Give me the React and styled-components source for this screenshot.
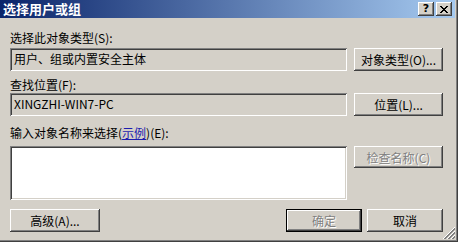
import React from 'react';
import styled, { createGlobalStyle, css } from 'styled-components';

const Global = createGlobalStyle`
  html, body {
    margin: 0;
    padding: 0;
    background: #d4d0c8;
  }
  body {
    font-family: "Noto Sans CJK SC", "Liberation Sans", sans-serif;
    font-size: 12px;
    color: #000;
  }
`;

const Window = styled.div`
  position: relative;
  width: 458px;
  height: 242px;
  box-sizing: border-box;
  background: #d4d0c8;
  box-shadow: inset -1px -1px #404040, inset -2px -2px #808080;
  display: flex;
  flex-direction: column;
  overflow: hidden;
`;

const TitleBar = styled.div`
  width: 455px;
  height: 18px;
  flex: none;
  display: flex;
  align-items: center;
  background: linear-gradient(to right, #0a246a, #a6caf0);
  padding-left: 3px;
  box-sizing: border-box;
`;

const Title = styled.div`
  flex: 1;
  color: #fff;
  font-weight: bold;
  font-size: 13px;
  line-height: 18px;
`;

const raised = css`
  background: #d4d0c8;
  box-shadow: inset -1px -1px #404040, inset 1px 1px #ffffff,
    inset -2px -2px #808080, inset 2px 2px #d4d0c8;
`;

const CaptionButton = styled.div`
  ${raised};
  width: 16px;
  height: 14px;
  margin-right: ${(p) => (p.$gap ? '2px' : '3px')};
  display: flex;
  align-items: center;
  justify-content: center;
  font-family: "DejaVu Sans", sans-serif;
  font-weight: bold;
  font-size: 11px;
  line-height: 14px;
`;

const Body = styled.div`
  flex: 1;
  display: flex;
  flex-direction: column;
  padding: 13px 15px 0 10px;
`;

const Label = styled.div`
  line-height: 14px;
  height: 14px;
  margin-top: ${(p) => p.$mt || 0}px;
  white-space: nowrap;
`;

const Row = styled.div`
  display: grid;
  grid-template-columns: 337px 89px;
  column-gap: 7px;
  align-items: start;
  margin-top: ${(p) => p.$mt || 0}px;
`;

const Field = styled.div`
  height: ${(p) => p.$h || 23}px;
  box-sizing: border-box;
  background: ${(p) => (p.$white ? '#fff' : '#d4d0c8')};
  box-shadow: inset 1px 1px #808080, inset -1px -1px #ffffff,
    inset 2px 2px #404040, inset -2px -2px #d4d0c8;
  padding: 0 4px;
  line-height: 22px;
  white-space: nowrap;
`;

const Button = styled.div`
  ${raised};
  height: ${(p) => p.$h || 23}px;
  width: ${(p) => (p.$w ? `${p.$w}px` : 'auto')};
  margin-left: ${(p) => p.$ml || 0}px;
  box-sizing: border-box;
  display: flex;
  align-items: center;
  justify-content: center;
  white-space: nowrap;
  color: ${(p) => (p.$disabled ? '#808080' : '#000')};
  text-shadow: ${(p) => (p.$disabled ? '1px 1px #ffffff' : 'none')};
  ${(p) =>
    p.$default &&
    css`
      box-shadow: inset 0 0 0 1px #000, inset -2px -2px #404040,
        inset 2px 2px #ffffff, inset -3px -3px #808080;
    `}
`;

const Link = styled.span`
  color: #1c1cb0;
  text-decoration: underline;
`;

const BottomRow = styled.div`
  display: flex;
  align-items: center;
  margin-top: 9px;
`;

const Spacer = styled.div`
  flex: 1;
`;

const Grip = styled.svg`
  position: absolute;
  right: 2px;
  bottom: 2px;
`;

const CloseIcon = () => (
  <svg width="8" height="7" viewBox="0 0 8 7">
    <path d="M0 0 L7 7 M1 0 L8 7 M7 0 L0 7 M8 0 L1 7" stroke="#000" strokeWidth="1" />
  </svg>
);

export default function App() {
  return (
    <>
      <Global />
      <Window>
        <TitleBar>
          <Title>选择用户或组</Title>
          <CaptionButton $gap>?</CaptionButton>
          <CaptionButton>
            <CloseIcon />
          </CaptionButton>
        </TitleBar>
        <Body>
          <Label>选择此对象类型(S):</Label>
          <Row $mt={3}>
            <Field>用户、组或内置安全主体</Field>
            <Button>对象类型(O)...</Button>
          </Row>
          <Label $mt={7}>查找位置(F):</Label>
          <Row $mt={1}>
            <Field>XINGZHI-WIN7-PC</Field>
            <Button>位置(L)...</Button>
          </Row>
          <Label $mt={10}>
            输入对象名称来选择(<Link>示例</Link>)(E):
          </Label>
          <Row $mt={6}>
            <Field $white $h={54} />
            <Button $h={22} $disabled>
              检查名称(C)
            </Button>
          </Row>
          <BottomRow>
            <Button $w={90}>高级(A)...</Button>
            <Spacer />
            <Button $w={76} $default $disabled>
              确定
            </Button>
            <Button $w={76} $ml={5}>
              取消
            </Button>
          </BottomRow>
        </Body>
        <Grip width="13" height="13" viewBox="0 0 13 13">
          <path d="M12 1 L1 12 M12 5 L5 12 M12 9 L9 12" stroke="#808080" strokeWidth="1" />
          <path d="M12 2 L2 12 M12 6 L6 12 M12 10 L10 12" stroke="#808080" strokeWidth="1" />
          <path d="M12 0 L0 12 M12 4 L4 12 M12 8 L8 12" stroke="#ffffff" strokeWidth="1" />
        </Grip>
      </Window>
    </>
  );
}
